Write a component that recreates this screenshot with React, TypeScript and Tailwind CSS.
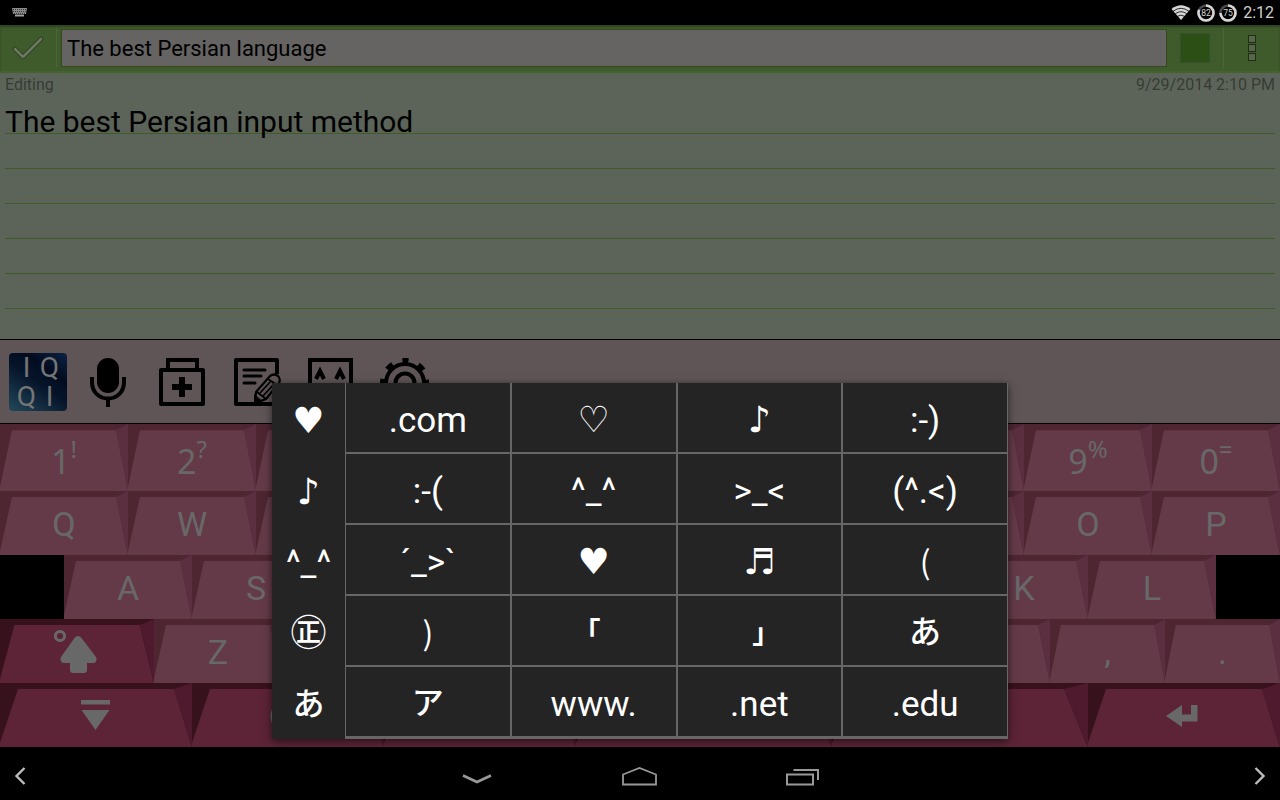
import { useState } from 'react';
import type { ReactNode } from 'react';
import clsx from 'clsx';

type KeyDef = {
  label?: ReactNode;
  name: string;
  sup?: string;
  grow: string;
  dark?: boolean;
};

const letter = (c: string): KeyDef => ({ label: c, name: c, grow: 'grow-[128]' });
const digit = (c: string, sup: string): KeyDef => ({ ...letter(c), sup });
// keys behind the symbol popup keep their shape but show no legend
const covered = (c: string): KeyDef => ({ name: c, grow: 'grow-[128]' });

const ShiftIcon = () => (
  <svg width="46" height="46" viewBox="0 0 46 46">
    <circle cx="6" cy="7" r="4.6" fill="none" stroke="#686868" strokeWidth="3" />
    <path
      d="M24 7q2 0 3.500 2L42 28q1.500 2.500 0 4.500-1 1.500-3 1.500h-6v7q0 3-3 3H19q-3 0-3-3v-7h-6q-2 0-3-1.500-1.500-2 0-4.500L20.500 9Q22 7 24 7Z"
      fill="#686868"
    />
  </svg>
);

const HideIcon = () => (
  <svg width="30" height="32" viewBox="0 0 30 32" className="-ml-px">
    <path d="M0 0h29v4.500H0zM.500 10h28l-14 20Z" fill="#686868" />
  </svg>
);

const GlobeIcon = () => (
  <svg width="36" height="36" viewBox="0 0 36 36" fill="none" stroke="#686868" strokeWidth="3">
    <circle cx="18" cy="18" r="16" />
    <path d="M2 18h32M18 2c-10 10-10 22 0 32M18 2c10 10 10 22 0 32" />
  </svg>
);

const EnterIcon = () => (
  <svg width="36" height="24" viewBox="0 0 36 24">
    <path d="M0 12 16 1v9.500h9V1h6.500v16.500H16V23Z" fill="#686868" />
  </svg>
);

const digitRow = [
  digit('1', '!'), digit('2', '?'),
  ...'345678'.split('').map(covered),
  digit('9', '%'), digit('0', '='),
];
const topRow = [
  ...'QW'.split('').map(letter),
  ...'ERTYUI'.split('').map(covered),
  ...'OP'.split('').map(letter),
];
const homeRow = [
  ...'AS'.split('').map(letter),
  ...'DFGHJ'.split('').map(covered),
  ...'KL'.split('').map(letter),
];
const bottomRow: KeyDef[] = [
  { label: <ShiftIcon />, name: 'Shift', grow: 'grow-[154]', dark: true },
  letter('Z'),
  ...'XCVBNM'.split('').map(covered),
  { label: ',', name: 'Comma', grow: 'grow-[115]' },
  { label: '.', name: 'Period', grow: 'grow-[115]' },
];
const actionRow: KeyDef[] = [
  { label: <HideIcon />, name: 'Hide keyboard', grow: 'grow-[192]', dark: true },
  { label: <GlobeIcon />, name: 'Language', grow: 'grow-[192]', dark: true },
  { name: 'Symbols', grow: 'grow-[192]', dark: true },
  { name: 'Space', grow: 'grow-[256]', dark: true },
  { name: 'Backspace', grow: 'grow-[256]', dark: true },
  { label: <EnterIcon />, name: 'Enter', grow: 'grow-[192]', dark: true },
];

const Key = ({ label, name, sup, grow, dark }: KeyDef) => (
  <button
    aria-label={name}
    className={clsx('relative flex basis-0 items-center justify-center pt-0.5 text-[#686868]', grow)}
  >
    <svg
      viewBox="0 0 128 64"
      preserveAspectRatio="none"
      className="absolute inset-0 h-full w-full"
    >
      <path d="M0 0h128v64H0Z" fill={dark ? '#37121c' : '#4d2632'} />
      <path d="M116 6 128 0v64Z" fill={dark ? '#4f1a2d' : '#5b2f40'} />
      <path d="M12 6h104l11 54 1 4H0v-4Z" fill={dark ? '#5c2436' : '#643a48'} />
    </svg>
    {sup ? (
      <>
        <span className="relative pt-1 font-['Noto_Sans',sans-serif] text-[34px] leading-10">{label}</span>
        <span className="relative -mt-5 font-['Noto_Sans',sans-serif] text-2xl leading-8">{sup}</span>
      </>
    ) : (
      <span className="relative text-[34px] leading-10">{label}</span>
    )}
  </button>
);

const symbols = [
  '.com', '♡', '♪', ':-)',
  ':-(', '^_^', '>_<', '(^.<)',
  '´_>`', '♥', '♬', '(',
  ')', '｢', '｣', 'あ',
  'ア', 'www.', '.net', '.edu',
];
const categories = ['♥', '♪', '^_^', '㊣', 'あ'];

const glyphStyle = (s: string) => {
  if (/^[♡♥♪♬]$/.test(s)) return "font-['DejaVu_Sans',sans-serif] text-4xl pt-1";
  if (s === '㊣') return "font-['Noto_Sans_CJK_JP',sans-serif] text-4xl font-medium pb-1";
  if (/^[｢｣]$/.test(s)) return "font-['Noto_Sans_CJK_JP',sans-serif] text-[28px] font-bold";
  if (/^[()]$/.test(s)) return "font-['Noto_Sans_CJK_JP',sans-serif] text-[32px]";
  if (/^[あア]$/.test(s)) return "font-['Noto_Sans_CJK_JP',sans-serif] text-[32px] font-medium pb-1";
  return 'pt-1.5 text-[35px]';
};

const SymbolButton = ({ text, className }: { text: string; className?: string }) => (
  <button
    className={clsx(
      'flex items-center justify-center bg-[#242424] leading-10 text-white',
      glyphStyle(text),
      className
    )}
  >
    {text}
  </button>
);

const SymbolPopup = () => (
  <div className="absolute bottom-2 left-1/2 flex w-[736px] -translate-x-1/2 shadow-[0_2px_8px_rgba(0,0,0,0.6)]">
    <div className="flex w-[73px] flex-col bg-[#242424]">
      {categories.map(c => (
        <SymbolButton key={c} text={c} className="h-[71px]" />
      ))}
    </div>
    <div className="grid flex-1 grid-cols-4 gap-0.5 bg-[#666] px-px pb-[3px]">
      {symbols.map((s, i) => (
        <SymbolButton key={i} text={s} className="h-[69px]" />
      ))}
    </div>
  </div>
);

const StatusRing = ({ value }: { value: number }) => (
  <svg width="18" height="18" viewBox="0 0 18 18">
    <circle cx="9" cy="9" r="7.500" fill="none" stroke="#4a4a4a" strokeWidth="2.600" />
    <circle
      cx="9"
      cy="9"
      r="7.500"
      fill="none"
      stroke="#d6d6d6"
      strokeWidth="2.600"
      pathLength="100"
      strokeDasharray={`${value} 100`}
      transform="rotate(-90 9 9)"
    />
    <text x="9" y="12" textAnchor="middle" fontSize="8.5" fill="#d6d6d6">
      {value}
    </text>
  </svg>
);

const StatusBar = () => (
  <div className="flex h-[25px] items-center bg-black pr-1.5 pl-3">
    <svg width="15" height="9" viewBox="0 0 15 9">
      <path d="M0 0h15l-1 6H1Z" fill="#8c8c8c" />
      <path d="M1 1.500h13M1 3.500h13M2 5.300h11" stroke="#222" strokeWidth=".8" strokeDasharray="1 1" />
      <path d="M3 6.500h9v2H3Z" fill="#a0a0a0" />
    </svg>
    <div className="ml-auto flex items-center gap-1">
      <svg width="20" height="15" viewBox="0 0 20 15" fill="none" className="mr-0.5">
        <path d="M10 15 .5 4Q10-3.500 19.500 4Z" fill="#d6d6d6" />
        <path d="M2 6.300q8-6 16 0M4.300 8.700q5.700-4 11.400 0M6.600 11.200q3.400-2 6.800 0" stroke="#000" strokeWidth=".8" />
      </svg>
      <StatusRing value={82} />
      <StatusRing value={75} />
      <span className="ml-0.5 text-base leading-5 text-[#cfcfcf]">2:12</span>
    </div>
  </div>
);

const Toolbar = () => (
  <div className="flex h-[85px] items-center border-y border-black bg-[#5f5557] pl-[9px]">
    <button
      aria-label="IQQI"
      className="grid size-[58px] grid-cols-2 place-items-center rounded-sm bg-[linear-gradient(35deg,#22485a,#06142a_50%,#020c20_70%,#0a2344)] px-1.5 text-[28px] leading-[29px] text-[#757575]"
    >
      <span>I</span>
      <span>Q</span>
      <span>Q</span>
      <span>I</span>
    </button>
    <div className="ml-4 flex items-center gap-6">
      <button aria-label="Voice input">
        <svg width="50" height="50" viewBox="0 0 50 50" fill="none">
          <rect x="14" y="1" width="22" height="35" rx="11" fill="#000" />
          <path d="M9 20v5c0 22 32 22 32 0v-5M25 42v8" stroke="#000" strokeWidth="4" />
        </svg>
      </button>
      <button aria-label="Toolbox">
        <svg width="50" height="50" viewBox="0 0 50 50" fill="none" stroke="#000">
          <path d="M11 12V3h29v9" strokeWidth="4" />
          <rect x="4" y="13" width="42" height="34" strokeWidth="4" strokeLinejoin="round" />
          <path d="M15 30h20M25 20v20" strokeWidth="6" />
        </svg>
      </button>
      <button aria-label="Notes">
        <svg width="50" height="50" viewBox="0 0 50 50" fill="none" stroke="#000">
          <path d="M46 17V3H5v44h41V32" strokeWidth="4" strokeLinejoin="round" />
          <path d="M13 13h21M13 19h17M13 26h11" strokeWidth="3" strokeLinecap="round" />
          <path d="M24 46 25 35 39 19q4-3 8 0 3 3 1 7L35 42Z" fill="#5f5557" strokeWidth="2.200" />
          <path d="M24 46V39l6 5ZM26 35l9 7M37 22l9 6M29 36 40 24M32 39 43 27" fill="#000" strokeWidth="1.800" />
        </svg>
      </button>
      <button aria-label="Emoticons">
        <svg width="50" height="50" viewBox="0 0 50 50" fill="none" stroke="#000">
          <rect x="5" y="3" width="41" height="44" strokeWidth="4" />
          <path d="m11 22 4-8 4 8M31 22l4-8 4 8" strokeWidth="4" />
          <path d="M17 34q8 6 16 0" strokeWidth="3" />
        </svg>
      </button>
      <button aria-label="Settings">
        <svg width="50" height="50" viewBox="0 0 50 50" fill="none" stroke="#000">
          <circle cx="26" cy="26" r="19" strokeWidth="4" />
          <circle cx="26" cy="26" r="9.500" strokeWidth="4" />
          <circle cx="26" cy="26" r="22" strokeWidth="6" strokeDasharray="7 10.280" strokeDashoffset="3.500" transform="rotate(-90 26 26)" />
        </svg>
      </button>
    </div>
  </div>
);

const NavBar = () => (
  <nav className="grid h-[53px] grid-cols-3 items-center bg-black px-3.5 pt-1">
    <button aria-label="Previous" className="justify-self-start">
      <svg width="12" height="18" viewBox="0 0 12 18" fill="none" stroke="#bdbdbd" strokeWidth="2.400">
        <path d="m10.500 1-8 8 8 8" />
      </svg>
    </button>
    <div className="flex items-center justify-center gap-32 text-[#999]">
      <button aria-label="Back">
        <svg width="34" height="20" viewBox="0 0 34 20" fill="none" stroke="currentColor" strokeWidth="2.600">
          <path d="m3 9.500 14 6.500 14-6.500" />
        </svg>
      </button>
      <button aria-label="Home">
        <svg width="36" height="20" viewBox="0 0 36 20" fill="none" stroke="currentColor" strokeWidth="1.800">
          <path d="M1 18.500V8.500L17.500 2 34 8.500v10Z" />
        </svg>
      </button>
      <button aria-label="Recent apps">
        <svg width="34" height="20" viewBox="0 0 34 20" fill="none" stroke="currentColor" strokeWidth="2">
          <path d="M1 8.500h26v10H1ZM7.500 4H32v10" />
        </svg>
      </button>
    </div>
    <button aria-label="Next" className="justify-self-end">
      <svg width="12" height="18" viewBox="0 0 12 18" fill="none" stroke="#bdbdbd" strokeWidth="2.400">
        <path d="m1.500 1 8 8-8 8" />
      </svg>
    </button>
  </nav>
);

const App = () => {
  const [title, setTitle] = useState('The best Persian language');
  const [body, setBody] = useState('The best Persian input method');

  return (
    <div className="flex min-h-screen flex-col bg-[#5c6459] font-[Roboto,sans-serif]">
      <StatusBar />

      {/* Action bar */}
      <header className="flex h-12 items-center border-b-2 border-[#42632d] bg-[#3f5a2b] shadow-[inset_0_2px_2px_rgba(0,0,0,0.25)]">
        <button aria-label="Done" className="flex h-10 w-[57px] items-center justify-center border-r border-[#4b6439]">
          <svg width="32" height="24" viewBox="0 0 32 24" fill="none" strokeLinecap="round" strokeLinejoin="round">
            <path d="m3 13 8 8L29 3" stroke="#2b3f1e" strokeWidth="4.500" />
            <path d="m3 13 8 8L29 3" stroke="#6b7663" strokeWidth="2.600" />
          </svg>
        </button>
        <input
          aria-label="Title"
          value={title}
          onChange={e => setTitle(e.target.value)}
          className="ml-1 h-[38px] min-w-0 flex-1 border border-[#34481f] bg-[#656462] px-[5px] text-[22px] text-black outline-none"
        />
        <button aria-label="Note color" className="mx-[13px] size-[30px] border border-[#36502a] bg-[#2c4f15]" />
        <button aria-label="More options" className="flex h-10 w-[57px] flex-col items-center justify-center gap-px border-l border-[#4b6439]">
          <span className="size-2 border border-[#1f2d16] bg-[#566648]" />
          <span className="size-2 border border-[#1f2d16] bg-[#566648]" />
          <span className="size-2 border border-[#1f2d16] bg-[#566648]" />
        </button>
      </header>

      {/* Note */}
      <main className="flex flex-1 flex-col px-[5px]">
        <div className="flex h-[31px] justify-between pt-0.5 text-base leading-5 text-[#363c34]">
          <span>Editing</span>
          <span>9/29/2014 2:10 PM</span>
        </div>
        <textarea
          aria-label="Note"
          value={body}
          onChange={e => setBody(e.target.value)}
          className="min-h-0 flex-1 resize-none bg-[repeating-linear-gradient(transparent_0_29px,#3e5b28_29px_30px,transparent_30px_35px)] text-[30px] leading-[35px] text-black outline-none"
        />
      </main>

      <section className="relative">
        <Toolbar />
        <div className="bg-black">
          <div className="flex h-[67px]">
            {digitRow.map(k => <Key key={k.name} {...k} />)}
          </div>
          <div className="flex h-16">
            {topRow.map(k => <Key key={k.name} {...k} />)}
          </div>
          <div className="flex h-16 px-[5%]">
            {homeRow.map(k => <Key key={k.name} {...k} />)}
          </div>
          <div className="flex h-16">
            {bottomRow.map(k => <Key key={k.name} {...k} />)}
          </div>
          <div className="flex h-16">
            {actionRow.map(k => <Key key={k.name} {...k} />)}
          </div>
        </div>
        <SymbolPopup />
      </section>

      <NavBar />
    </div>
  );
};

export default App;
